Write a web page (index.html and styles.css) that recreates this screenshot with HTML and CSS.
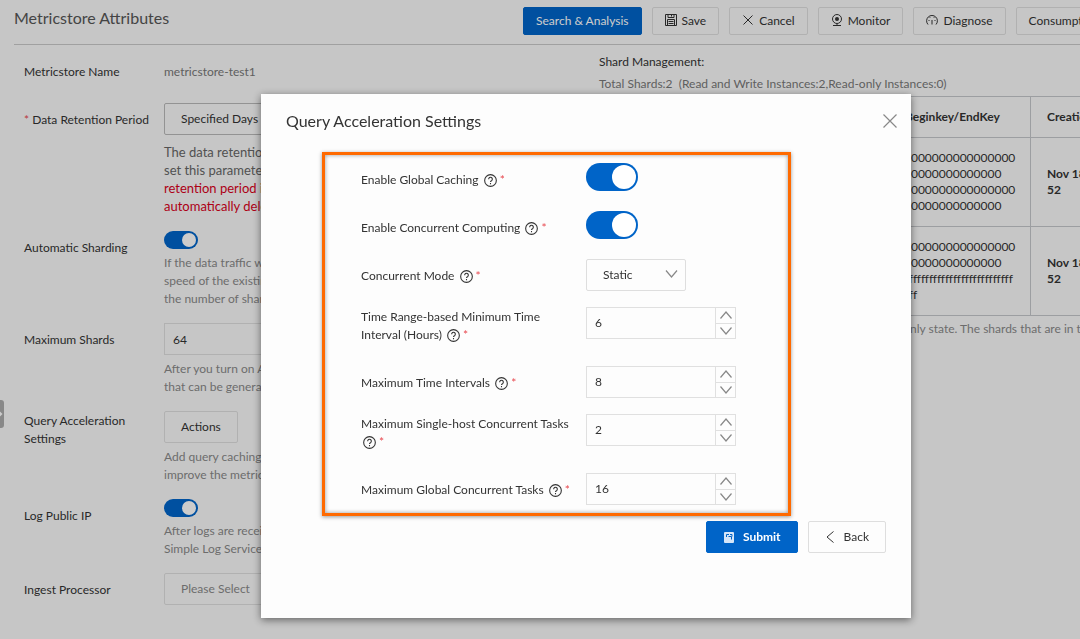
FILE: index.html
```html
<!DOCTYPE html>
<html lang="en">
<head>
<meta charset="UTF-8">
<title>Metricstore Attributes</title>
<link rel="stylesheet" href="styles.css">
</head>
<body>

<div class="page">
    <header class="page-header">
        <h1 class="page-title">Metricstore Attributes</h1>
        <div class="toolbar">
            <button type="button" class="btn btn-primary">Search &amp; Analysis</button>
            <button type="button" class="btn">
                <svg class="icon icon-save" viewBox="0 0 12 12"><path d="M.5.5h11v11H.5z M3 .5v3h6v-3 M6.5 1v1.500 M2.500 11.500V5.500h7v6 M3.500 7.500h5 M3.500 9.500h5"/></svg>
                Save
            </button>
            <button type="button" class="btn">
                <svg class="icon" viewBox="0 0 12 12"><path d="M1.500 1.500l9 9M10.500 1.500l-9 9"/></svg>
                Cancel
            </button>
            <button type="button" class="btn">
                <svg class="icon" viewBox="0 0 12 12"><circle cx="6" cy="5" r="4.500"/><circle cx="6" cy="5" r="2" fill="currentColor" stroke="none"/><path d="M6 9.500v2M2 11.500h8"/></svg>
                Monitor
            </button>
            <button type="button" class="btn">
                <svg class="icon" viewBox="0 0 12 12"><path d="M2 10.500A5.400 5.400 0 1 1 10 10.500M2.500 6.500h1M8.500 6.500h1M3.800 3.300l.5.700M8.200 3.300l-.5.700M6 6v4.500"/></svg>
                Diagnose
            </button>
            <button type="button" class="btn">Consumption Preview</button>
        </div>
    </header>

    <div class="page-body">
        <form class="attr-form">
            <div class="attr-row">
                <span class="attr-label">Metricstore Name</span>
                <div class="attr-field attr-text">metricstore-test1</div>
            </div>
            <div class="attr-row">
                <label class="attr-label" for="retention"><i class="star">*</i> Data Retention Period</label>
                <div class="attr-field">
                    <select class="box box-select box-dark" id="retention">
                        <option>Specified Days</option>
                        <option>Permanent Storage</option>
                    </select>
                    <p class="tip tip-big">
                        The data retention period of the Metricstore. If you<br>
                        set this parameter to a number of days, data whose<br>
                        <span class="red">retention period is longer than that number is<br>
                        automatically deleted.</span>
                    </p>
                </div>
            </div>
            <div class="attr-row">
                <label class="attr-label" for="sharding">Automatic Sharding</label>
                <div class="attr-field">
                    <input type="checkbox" class="switch" id="sharding" checked>
                    <p class="tip">
                        If the data traffic written exceeds the read and write<br>
                        speed of the existing shards, Simple Log Service adds to<br>
                        the number of shards automatically.
                    </p>
                </div>
            </div>
            <div class="attr-row">
                <label class="attr-label" for="shards">Maximum Shards</label>
                <div class="attr-field">
                    <input type="text" class="box" id="shards" value="64">
                    <p class="tip">
                        After you turn on Automatic Sharding, the readwrite shards<br>
                        that can be generated are limited to this number.
                    </p>
                </div>
            </div>
            <div class="attr-row">
                <span class="attr-label attr-label-two">Query Acceleration Settings</span>
                <div class="attr-field">
                    <button type="button" class="btn btn-large">Actions</button>
                    <p class="tip">
                        Add query caching and concurrent computing to<br>
                        improve the metric query performance.
                    </p>
                </div>
            </div>
            <div class="attr-row">
                <label class="attr-label" for="publicip">Log Public IP</label>
                <div class="attr-field">
                    <input type="checkbox" class="switch" id="publicip" checked>
                    <p class="tip">
                        After logs are received on the server,<br>
                        Simple Log Service adds the public IP address.
                    </p>
                </div>
            </div>
            <div class="attr-row">
                <label class="attr-label" for="processor">Ingest Processor</label>
                <div class="attr-field">
                    <select class="box box-select box-empty" id="processor">
                        <option>Please Select</option>
                    </select>
                </div>
            </div>
        </form>

        <section class="shards">
            <h2 class="shards-title">Shard Management:</h2>
            <p class="shards-total">Total Shards:2 &nbsp;(Read and Write Instances:2,Read-only Instances:0)</p>
            <table class="shards-table">
                <thead>
                    <tr>
                        <th class="col-id">ID</th>
                        <th class="col-status">Status</th>
                        <th class="col-key">Beginkey/EndKey</th>
                        <th class="col-time">Creation Time</th>
                    </tr>
                </thead>
                <tbody>
                    <tr>
                        <td>0</td>
                        <td>readwrite</td>
                        <td class="key">00000000000000000<br>000000000000000<br>00000000000000000<br>000000000000000</td>
                        <td class="time">Nov 18, 2022, 16:<br>52</td>
                    </tr>
                    <tr>
                        <td>1</td>
                        <td>readwrite</td>
                        <td class="key">00000000000000000<br>000000000000000<br>fffffffffffffffffffffffffffff<br>fffff</td>
                        <td class="time">Nov 18, 2022, 16:<br>52</td>
                    </tr>
                </tbody>
            </table>
            <p class="shards-note">Just the shards in the readwrite state are billed in the readonly state. The shards that are in the readonly state</p>
        </section>
    </div>

    <button type="button" class="collapse" aria-label="Expand">
        <svg viewBox="0 0 4 8"><path d="M0 1.500L2.500 4L0 6.500z"/></svg>
    </button>
</div>

<div class="overlay">
    <div class="dialog" role="dialog" aria-labelledby="dialog-title">
        <div class="dialog-header">
            <h2 class="dialog-title" id="dialog-title">Query Acceleration Settings</h2>
            <button type="button" class="dialog-close" aria-label="Close">
                <svg class="icon-close" viewBox="0 0 14 14"><path d="M.5.5l13 13M13.500.5l-13 13"/></svg>
            </button>
        </div>

        <form class="settings">
            <div class="set-row">
                <label class="set-label" for="caching">Enable Global Caching <svg class="help" viewBox="0 0 12 12"><circle cx="6" cy="6" r="5.400"/><path d="M4.300 4.800a1.700 1.700 0 1 1 2.600 1.400q-.9.500-.9 1.200M6 8.400v1.100"/></svg> <i class="star">*</i></label>
                <input type="checkbox" class="switch switch-large" id="caching" checked>
            </div>
            <div class="set-row">
                <label class="set-label" for="computing">Enable Concurrent Computing <svg class="help" viewBox="0 0 12 12"><circle cx="6" cy="6" r="5.400"/><path d="M4.300 4.800a1.700 1.700 0 1 1 2.600 1.400q-.9.500-.9 1.200M6 8.400v1.100"/></svg> <i class="star">*</i></label>
                <input type="checkbox" class="switch switch-large" id="computing" checked>
            </div>
            <div class="set-row">
                <label class="set-label" for="mode">Concurrent Mode <svg class="help" viewBox="0 0 12 12"><circle cx="6" cy="6" r="5.400"/><path d="M4.300 4.800a1.700 1.700 0 1 1 2.600 1.400q-.9.500-.9 1.200M6 8.400v1.100"/></svg> <i class="star">*</i></label>
                <div class="select">
                    <select class="box box-select" id="mode">
                        <option>Static</option>
                        <option>Dynamic</option>
                    </select>
                    <svg class="select-arrow" viewBox="0 0 12 8"><path d="M.5.500l5.500 6.500L11.500.500"/></svg>
                </div>
            </div>
            <div class="set-row">
                <label class="set-label set-label-two" for="interval">Time Range-based Minimum Time Interval (Hours) <svg class="help" viewBox="0 0 12 12"><circle cx="6" cy="6" r="5.400"/><path d="M4.300 4.800a1.700 1.700 0 1 1 2.600 1.400q-.9.500-.9 1.200M6 8.400v1.100"/></svg> <i class="star">*</i></label>
                <div class="number">
                    <input type="text" class="number-input" id="interval" value="6">
                    <div class="number-steps">
                        <button type="button" class="step" aria-label="Increase"><svg viewBox="0 0 12 8"><path d="M.5 7.500L6 1l5.500 6.500"/></svg></button>
                        <button type="button" class="step" aria-label="Decrease"><svg viewBox="0 0 12 8"><path d="M.5.500L6 7l5.500-6.500"/></svg></button>
                    </div>
                </div>
            </div>
            <div class="set-row">
                <label class="set-label" for="intervals">Maximum Time Intervals <svg class="help" viewBox="0 0 12 12"><circle cx="6" cy="6" r="5.400"/><path d="M4.300 4.800a1.700 1.700 0 1 1 2.600 1.400q-.9.500-.9 1.200M6 8.400v1.100"/></svg> <i class="star">*</i></label>
                <div class="number">
                    <input type="text" class="number-input" id="intervals" value="8">
                    <div class="number-steps">
                        <button type="button" class="step" aria-label="Increase"><svg viewBox="0 0 12 8"><path d="M.5 7.500L6 1l5.500 6.500"/></svg></button>
                        <button type="button" class="step" aria-label="Decrease"><svg viewBox="0 0 12 8"><path d="M.5.500L6 7l5.500-6.500"/></svg></button>
                    </div>
                </div>
            </div>
            <div class="set-row">
                <label class="set-label set-label-two" for="single">Maximum Single-host Concurrent Tasks <svg class="help" viewBox="0 0 12 12"><circle cx="6" cy="6" r="5.400"/><path d="M4.300 4.800a1.700 1.700 0 1 1 2.600 1.400q-.9.500-.9 1.200M6 8.400v1.100"/></svg> <i class="star">*</i></label>
                <div class="number">
                    <input type="text" class="number-input" id="single" value="2">
                    <div class="number-steps">
                        <button type="button" class="step" aria-label="Increase"><svg viewBox="0 0 12 8"><path d="M.5 7.500L6 1l5.500 6.500"/></svg></button>
                        <button type="button" class="step" aria-label="Decrease"><svg viewBox="0 0 12 8"><path d="M.5.500L6 7l5.500-6.500"/></svg></button>
                    </div>
                </div>
            </div>
            <div class="set-row">
                <label class="set-label" for="global">Maximum Global Concurrent Tasks <svg class="help" viewBox="0 0 12 12"><circle cx="6" cy="6" r="5.400"/><path d="M4.300 4.800a1.700 1.700 0 1 1 2.600 1.400q-.9.500-.9 1.200M6 8.400v1.100"/></svg> <i class="star">*</i></label>
                <div class="number">
                    <input type="text" class="number-input" id="global" value="16">
                    <div class="number-steps">
                        <button type="button" class="step" aria-label="Increase"><svg viewBox="0 0 12 8"><path d="M.5 7.500L6 1l5.500 6.500"/></svg></button>
                        <button type="button" class="step" aria-label="Decrease"><svg viewBox="0 0 12 8"><path d="M.5.500L6 7l5.500-6.500"/></svg></button>
                    </div>
                </div>
            </div>
        </form>

        <div class="dialog-footer">
            <button type="button" class="btn btn-large btn-primary btn-submit">
                <svg class="icon-submit" viewBox="0 0 10 11"><rect width="10" height="11" rx="1" fill="#d6e6f8" stroke="none"/><path d="M2.500 5V2.500H5M4.500 4.500l3 0v3M6 2.500h2v2" fill="none" stroke="#0064c8"/></svg>
                Submit
            </button>
            <button type="button" class="btn btn-large btn-back">
                <svg class="icon-back" viewBox="0 0 8 12"><path d="M7.500.5L1 6l6.500 5.500"/></svg>
                Back
            </button>
        </div>
    </div>
</div>

</body>
</html>
```
FILE: styles.css
```css
*{
    box-sizing: border-box;
}
body{
    margin: 0;
    overflow: hidden;
    background: #f8f8f8;
    color: #333;
    font: 12px/18px Lato, "Liberation Sans", sans-serif;
}
h1, h2, p{
    margin: 0;
    font-size: 12px;
    font-weight: normal;
}
button, input, select{
    font: inherit;
    color: inherit;
}
svg{
    fill: none;
    stroke: currentColor;
}

/* page */
.page{
    overflow: hidden;
}
.page-header{
    display: flex;
    align-items: center;
    margin-left: 14px;
    padding: 7px 0 9px;
    border-bottom: 1px solid #c8c8c8;
}
.page-title{
    flex: 0 0 509px;
    padding-bottom: 7px;
    font-size: 16px;
    color: #555;
}
.toolbar{
    display: flex;
    gap: 10px;
}
.btn{
    display: inline-flex;
    flex: none;
    align-items: center;
    height: 28px;
    padding: 0 12px;
    border: 1px solid #dedede;
    border-radius: 2px;
    background: transparent;
    white-space: nowrap;
}
.btn-primary{
    border-color: #0064c8;
    background: #0064c8;
    color: #fff;
}
.btn-large{
    height: 32px;
    padding: 0 16px;
}
.icon{
    width: 12px;
    height: 12px;
    margin: 0 5px 2px 0;
}
.page-body{
    display: flex;
    padding: 8px 0 0 24px;
}
.attr-form{
    flex: 0 0 575px;
    padding-top: 2px;
}
.attr-row{
    display: flex;
    margin-bottom: 15px;
}
.attr-label{
    flex: 0 0 140px;
    padding: 8px 10px 0 0;
    white-space: nowrap;
}
.attr-label-two{
    padding-top: 1px;
    white-space: normal;
}
.attr-text{
    padding: 8px 0 7px;
    color: #777;
}
.star{
    color: #e8484f;
    font-style: normal;
}
.box{
    display: block;
    width: 380px;
    height: 32px;
    padding: 0 8px;
    border: 1px solid #dedede;
    border-radius: 0;
    background: transparent;
}
.box-select{
    padding: 0 16px;
    border-radius: 2px;
    appearance: none;
}
.box-dark{
    border-color: #b8b8b8;
}
.box-empty{
    color: #888;
}
.tip{
    margin-top: 5px;
    color: #888;
    white-space: nowrap;
}
.tip-big{
    padding-bottom: 1px;
    margin-top: 8px;
    font-size: 13px;
    color: #666;
}
.red{
    color: #d9001b;
}
.switch{
    position: relative;
    display: block;
    width: 34px;
    height: 18px;
    margin: 0;
    border-radius: 9px;
    background: #0064c8;
    appearance: none;
}
.switch::after{
    content: "";
    position: absolute;
    top: 2px;
    right: 2px;
    width: 14px;
    height: 14px;
    border-radius: 50%;
    background: #fff;
}
.switch-large{
    width: 52px;
    height: 28px;
    border-radius: 14px;
}
.switch-large::after{
    width: 24px;
    height: 24px;
}
.collapse{
    position: absolute;
    left: 0;
    top: 400px;
    display: flex;
    align-items: center;
    width: 4px;
    height: 28px;
    padding: 0;
    border: 0;
    border-radius: 0 3px 3px 0;
    background: #aaa;
}
.collapse svg{
    width: 4px;
    height: 8px;
    fill: #fff;
    stroke: none;
}

/* shards */
.shards{
    flex: none;
    width: 560px;
}
.shards-total{
    margin: 4px 0 3px;
    color: #777;
}
.shards-table{
    width: 100%;
    table-layout: fixed;
    border-collapse: collapse;
    line-height: 16px;
}
.shards-table th,
.shards-table td{
    padding: 12px 16px;
    border: 1px solid #c4c6ca;
    text-align: left;
}
.shards-table th{
    font-weight: bold;
}
.col-id{
    width: 120px;
}
.col-status{
    width: 169px;
}
.col-key{
    width: 142px;
}
.shards-table .key{
    padding: 12px 8px;
    white-space: nowrap;
}
.shards-table .time{
    font-weight: bold;
    white-space: nowrap;
}
.shards-note{
    margin-top: 4px;
    color: #888;
    white-space: nowrap;
}

/* dialog */
.overlay{
    position: fixed;
    inset: 0;
    padding: 94px 0 0 261px;
    background: rgba(0, 0, 0, 0.2);
}
.dialog{
    width: 650px;
    padding: 17px 25px 65px;
    background: #fdfdfd;
    box-shadow: 0 2px 8px rgba(0, 0, 0, 0.5);
}
.dialog-header{
    display: flex;
    justify-content: space-between;
    align-items: center;
    margin-bottom: 21px;
}
.dialog-title{
    font-size: 16px;
    line-height: 20px;
}
.dialog-close{
    display: flex;
    padding: 0;
    margin-right: -11px;
    border: 0;
    background: none;
    color: #888;
}
.icon-close{
    width: 14px;
    height: 14px;
    stroke-width: 1.2;
}
.settings{
    margin: 0 95px 0 36px;
    padding: 8px 0 8px 36px;
    border: 3px solid #ff6a00;
    box-shadow: 0 1px 4px rgba(0, 0, 0, 0.4), inset 0 0 4px rgba(0, 0, 0, 0.4);
}
.set-row{
    display: flex;
    align-items: flex-start;
    min-height: 32px;
    margin-bottom: 16px;
}
.set-row:last-child{
    margin-bottom: 0;
}
.set-label{
    flex: 0 0 225px;
    padding: 8px 12px 0 0;
}
.set-label-two{
    padding: 1px 12px 6px 0;
}
.help{
    width: 13px;
    height: 13px;
    margin-left: 2px;
    vertical-align: -3px;
}
.select{
    position: relative;
    width: 100px;
}
.select .box{
    width: 100%;
}
.select-arrow{
    position: absolute;
    right: 8px;
    top: 11px;
    width: 13px;
    height: 8px;
    color: #888;
    pointer-events: none;
    stroke-width: 1.2;
}
.number{
    display: flex;
    width: 150px;
    height: 32px;
    border: 1px solid #e0e0e0;
}
.number-input{
    flex: 1;
    min-width: 0;
    padding: 0 8px;
    border: 0;
    background: transparent;
}
.number-steps{
    display: flex;
    flex-direction: column;
    width: 20px;
    border-left: 1px solid #e0e0e0;
}
.step{
    display: flex;
    flex: 1;
    align-items: center;
    justify-content: center;
    padding: 0;
    border: 0;
    background: none;
    color: #888;
}
.step + .step{
    border-top: 1px solid #e0e0e0;
}
.step svg{
    width: 12px;
    height: 8px;
    stroke-width: 1.2;
}
.dialog-footer{
    display: flex;
    justify-content: flex-end;
    gap: 10px;
    margin-top: 5px;
}
.btn-submit{
    font-weight: bold;
}
.icon-submit{
    width: 10px;
    height: 11px;
    margin: 0 9px 0 1px;
}
.icon-back{
    width: 8px;
    height: 12px;
    margin: 0 10px 0 1px;
}
```
